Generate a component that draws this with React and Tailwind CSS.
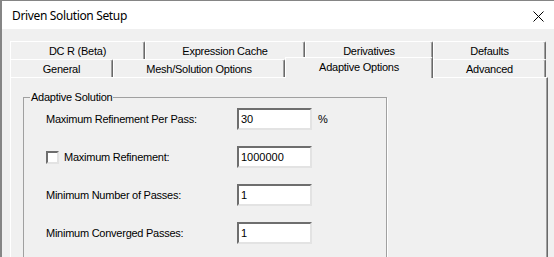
const Tab = ({ label, w, selected }) => {
  if (selected) {
    return (
      <div
        className={`relative z-10 -mt-[2px] h-[21px] ${w} flex items-start justify-center pt-[3px] bg-[#f0f0f0] border-t border-l border-white border-r border-r-[#696969] rounded-tr-[2px] shadow-[inset_-1px_0_0_#a0a0a0] leading-[13px]`}
      >
        {label}
      </div>
    );
  }
  return (
    <div
      className={`h-full ${w} flex items-center justify-center pt-[2px] border-t border-l border-white border-r border-r-[#696969] rounded-tr-[2px] shadow-[inset_-1px_0_0_#a0a0a0] leading-[13px]`}
    >
      {label}
    </div>
  );
};

const Field = ({ value }) => (
  <input
    type="text"
    readOnly
    defaultValue={value}
    className="w-[75px] h-[22px] px-[2px] bg-white outline-none border-2 border-[#e3e3e3] border-t-[#6e6e6e] border-l-[#6e6e6e] text-[11px] tracking-normal"
  />
);

export default function App() {
  return (
    <div className="w-[554px] h-[257px] overflow-hidden flex flex-col bg-[#f0f0f0] border-t border-l-2 border-[#858585] font-['Liberation_Sans',Arial,sans-serif] text-[11px] tracking-[-0.25px] text-black">
      {/* title bar */}
      <div className="h-[28px] shrink-0 bg-white flex items-center justify-between pl-[10px] pr-[10px]">
        <span className="font-['Noto_Sans',sans-serif] text-[12px] tracking-[-0.35px] pt-[2px]">
          Driven Solution Setup
        </span>
        <svg width="11" height="11" viewBox="0 0 11 11" className="mt-[2px]">
          <path d="M0.5 0.5 L10.5 10.5 M10.5 0.5 L0.5 10.5" stroke="#000" strokeWidth="1" />
        </svg>
      </div>

      {/* body */}
      <div className="flex-1 flex flex-col pl-[8px] pt-[12px]">
        <div className="flex h-[18px] w-[536px]">
          <Tab label="DC R (Beta)" w="w-[135px]" />
          <Tab label="Expression Cache" w="w-[160px]" />
          <Tab label="Derivatives" w="w-[128px]" />
          <Tab label="Defaults" w="w-[113px]" />
        </div>
        <div className="flex items-start h-[18px] w-[536px]">
          <Tab label="General" w="w-[103px]" />
          <Tab label="Mesh/Solution Options" w="w-[172px]" />
          <Tab label="Adaptive Options" w="w-[148px]" selected />
          <Tab label="Advanced" w="w-[113px]" />
        </div>

        {/* panel */}
        <div className="flex-1 w-[538px] pl-[12px] pt-[13px] border-t border-l border-white border-r border-r-[#696969] shadow-[inset_-1px_0_0_#a0a0a0]">
          <fieldset className="w-[364px] h-[200px] border border-[#a0a0a0] shadow-[1px_1px_0_#fff]">
            <legend className="ml-[6px] px-[1px] leading-[13px]">Adaptive Solution</legend>
            <div className="flex flex-col gap-[16px] pl-[22px] pt-[4px]">
              <div className="flex items-center h-[22px]">
                <span className="w-[191px] shrink-0">Maximum Refinement Per Pass:</span>
                <Field value="30" />
                <span className="ml-[6px]">%</span>
              </div>
              <div className="flex items-center h-[22px]">
                <div className="w-[191px] shrink-0 flex items-center">
                  <div className="w-[13px] h-[13px] bg-white border-2 border-[#e3e3e3] border-t-[#6e6e6e] border-l-[#6e6e6e]" />
                  <span className="ml-[5px]">Maximum Refinement:</span>
                </div>
                <Field value="1000000" />
              </div>
              <div className="flex items-center h-[22px]">
                <span className="w-[191px] shrink-0">Minimum Number of Passes:</span>
                <Field value="1" />
              </div>
              <div className="flex items-center h-[22px]">
                <span className="w-[191px] shrink-0">Minimum Converged Passes:</span>
                <Field value="1" />
              </div>
            </div>
          </fieldset>
        </div>
      </div>
    </div>
  );
}
